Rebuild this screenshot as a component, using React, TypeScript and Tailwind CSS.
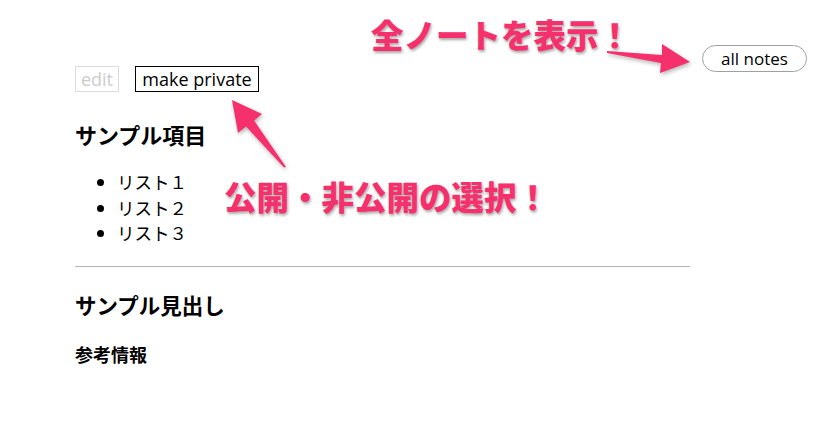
import React from 'react'

const items = ['リスト１', 'リスト２', 'リスト３']

// 注釈テキスト（白フチ＋影）
function Callout({ text, className }: { text: string; className: string }) {
  return (
    <div
      className={
        'absolute whitespace-nowrap text-[32.5px] leading-none font-black text-[#f5306d] [paint-order:stroke_fill] [-webkit-text-stroke:5px_white] [text-shadow:1px_2px_3px_rgba(0,0,0,0.35)] ' +
        className
      }
    >
      {text}
    </div>
  )
}

export default function App() {
  return (
    <div className="relative w-[830px] h-[426px] bg-white overflow-hidden text-black font-['Open_Sans','Noto_Sans_CJK_JP',sans-serif]">
      <div className="flex">
        <main className="ml-[75px] w-[615px] pt-[66px]">
          <div className="flex gap-4">
            <button className="h-[26px] w-[44px] border border-[#dddddd] text-[18px] leading-none text-[#cccccc]">
              edit
            </button>
            <button className="h-[26px] w-[124px] border border-black text-[18px] leading-none text-black">
              make private
            </button>
          </div>

          <h2 className="mt-[27px] text-[22px] leading-[30px] font-bold font-['Noto_Sans_CJK_JP',sans-serif]">
            サンプル項目
          </h2>

          <ul className="mt-[20px] pl-[42px] list-disc text-[17.5px] leading-[25.5px] font-['Noto_Sans_CJK_JP',sans-serif]">
            {items.map(item => (
              <li key={item}>{item}</li>
            ))}
          </ul>

          <hr className="mt-[20px] border-t border-[#b5b5b5]" />

          <h2 className="mt-[23px] text-[21.5px] leading-[30px] font-bold font-['Noto_Sans_CJK_JP',sans-serif]">
            サンプル見出し
          </h2>
          <h3 className="mt-[21px] text-[18px] leading-[26px] font-bold font-['Noto_Sans_CJK_JP',sans-serif]">
            参考情報
          </h3>
        </main>

        <aside className="ml-[12px] pt-[45px]">
          <button className="h-[27px] w-[105px] rounded-full border border-[#a0a0a0] text-[17px] leading-none text-black">
            all notes
          </button>
        </aside>
      </div>

      {/* 矢印 */}
      <svg
        className="absolute inset-0 pointer-events-none drop-shadow-[1px_2px_2px_rgba(0,0,0,0.3)]"
        width="830"
        height="426"
        viewBox="0 0 830 426"
      >
        <polygon
          fill="#f5306d"
          points="607,51 662,55 662,44 690,62 660,73 661,63 607,53"
        />
        <polygon
          fill="#f5306d"
          points="232,100 262,114 254,120.5 286,167 284,167.5 246,126.5 238,133"
        />
      </svg>

      <Callout text="全ノートを表示！" className="left-[371px] top-[20px]" />
      <Callout text="公開・非公開の選択！" className="left-[224px] top-[182px]" />
    </div>
  )
}
